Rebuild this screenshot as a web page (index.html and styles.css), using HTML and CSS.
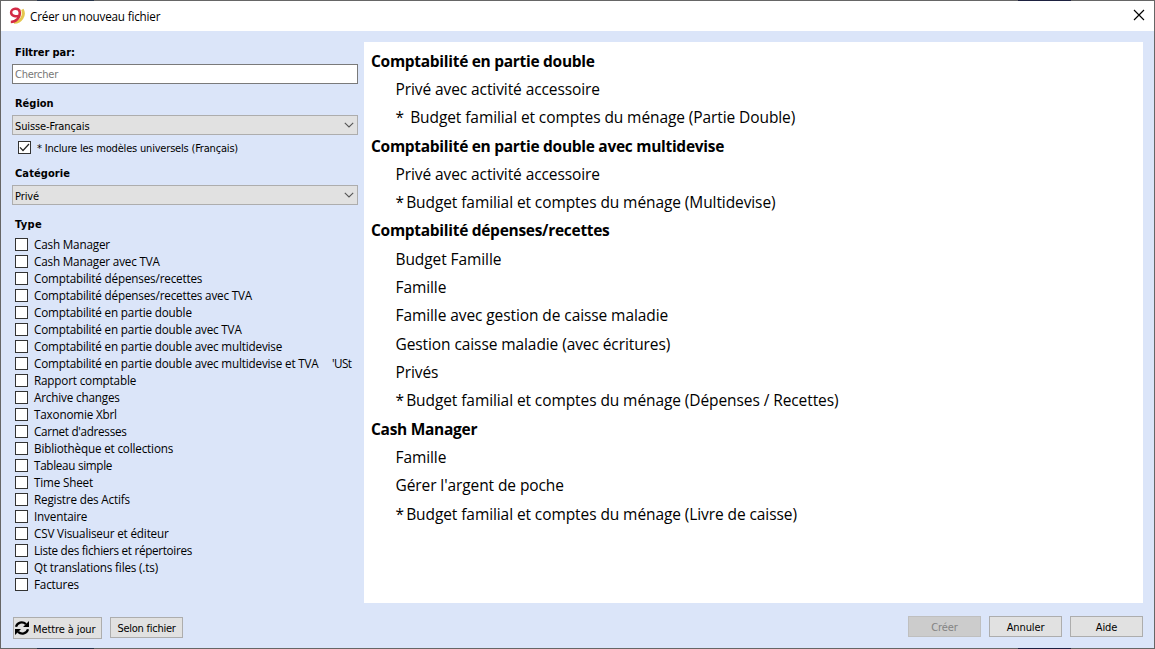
FILE: index.html
```html
<!DOCTYPE html>
<html lang="fr">
<head>
<meta charset="utf-8">
<title>Créer un nouveau fichier</title>
<link rel="stylesheet" href="styles.css">
</head>
<body>
<div class="window">
  <header class="titlebar">
    <svg class="logo" width="16" height="18" viewBox="0 0 16 18"><path d="M13.2 2.5C16.5 8 12 15.5 5 15.3" fill="none" stroke="#e5c64e" stroke-width="3"/><path d="M11.5 2C14 7 10 13.5 4 14.5" fill="none" stroke="#fff3b8" stroke-width="1"/><path d="M10 8.5C7.5 10 2.3 9.2 2.1 5.6C1.9 1.1 10.2.2 10.8 5.4C11.2 10.5 7 14.8 1.8 14.9" fill="none" stroke="#d32a45" stroke-width="2.5"/></svg>
    <span class="title">Créer un nouveau fichier</span>
    <svg class="close" width="12" height="12" viewBox="0 0 12 12"><path d="M1 1L11 11M11 1L1 11" stroke="#000" stroke-width="1.15"/></svg>
  </header>
  <main class="content">
    <aside class="filters">
      <h2 class="label label-search">Filtrer par:</h2>
      <div class="field search">Chercher</div>
      <h2 class="label label-region">Région</h2>
      <div class="field select"><span>Suisse-Français</span><svg width="10" height="6" viewBox="0 0 10 6"><path d="M.8.8L5 5L9.2.8" fill="none" stroke="#555" stroke-width="1.1"/></svg></div>
      <div class="include"><span class="box"><svg width="11" height="11" viewBox="0 0 11 11"><path d="M1 5.3L4 8.5L10 2" fill="none" stroke="#222" stroke-width="1.2"/></svg></span><span class="include-text">* Inclure les modèles universels (Français)</span></div>
      <h2 class="label label-category">Catégorie</h2>
      <div class="field select"><span>Privé</span><svg width="10" height="6" viewBox="0 0 10 6"><path d="M.8.8L5 5L9.2.8" fill="none" stroke="#555" stroke-width="1.1"/></svg></div>
      <h2 class="label label-type">Type</h2>
      <ul class="types">
        <li><i class="box"></i><span>Cash Manager</span></li>
        <li><i class="box"></i><span>Cash Manager avec TVA</span></li>
        <li><i class="box"></i><span>Comptabilité dépenses/recettes</span></li>
        <li><i class="box"></i><span>Comptabilité dépenses/recettes avec TVA</span></li>
        <li><i class="box"></i><span>Comptabilité en partie double</span></li>
        <li><i class="box"></i><span>Comptabilité en partie double avec TVA</span></li>
        <li><i class="box"></i><span>Comptabilité en partie double avec multidevise</span></li>
        <li><i class="box"></i><span class="long">Comptabilité en partie double avec multidevise et TVA</span><span class="suffix">'USt</span></li>
        <li><i class="box"></i><span>Rapport comptable</span></li>
        <li><i class="box"></i><span>Archive changes</span></li>
        <li><i class="box"></i><span>Taxonomie Xbrl</span></li>
        <li><i class="box"></i><span class="tight">Carnet d'adresses</span></li>
        <li><i class="box"></i><span>Bibliothèque et collections</span></li>
        <li><i class="box"></i><span class="tight">Tableau simple</span></li>
        <li><i class="box"></i><span>Time Sheet</span></li>
        <li><i class="box"></i><span>Registre des Actifs</span></li>
        <li><i class="box"></i><span>Inventaire</span></li>
        <li><i class="box"></i><span>CSV Visualiseur et éditeur</span></li>
        <li><i class="box"></i><span class="tight">Liste des fichiers et répertoires</span></li>
        <li><i class="box"></i><span>Qt translations files (.ts)</span></li>
        <li><i class="box"></i><span>Factures</span></li>
      </ul>
    </aside>
    <section class="templates">
      <h3>Comptabilité en partie double</h3>
      <p>Privé avec activité accessoire</p>
      <p><span class="star wide">*</span>Budget familial et comptes du ménage (Partie Double)</p>
      <h3>Comptabilité en partie double avec multidevise</h3>
      <p>Privé avec activité accessoire</p>
      <p><span class="star">*</span>Budget familial et comptes du ménage (Multidevise)</p>
      <h3>Comptabilité dépenses/recettes</h3>
      <p>Budget Famille</p>
      <p>Famille</p>
      <p>Famille avec gestion de caisse maladie</p>
      <p>Gestion caisse maladie (avec écritures)</p>
      <p>Privés</p>
      <p><span class="star">*</span>Budget familial et comptes du ménage (Dépenses / Recettes)</p>
      <h3>Cash Manager</h3>
      <p>Famille</p>
      <p>Gérer l'argent de poche</p>
      <p><span class="star">*</span>Budget familial et comptes du ménage (Livre de caisse)</p>
    </section>
  </main>
  <footer class="actions">
    <button class="btn update"><svg width="16" height="16" viewBox="0 0 16 16"><path d="M2 6.7C3.2 2.3 8.5 1 12 4.2M14 9.3C12.8 13.7 7.5 15 4 11.8" fill="none" stroke="#000" stroke-width="2.3"/><path d="M15 1V7H9ZM1 15V9H7Z"/></svg><span>Mettre à jour</span></button>
    <button class="btn from-file">Selon fichier</button>
    <span class="spacer"></span>
    <button class="btn disabled">Créer</button>
    <button class="btn">Annuler</button>
    <button class="btn">Aide</button>
  </footer>
</div>
</body>
</html>
```
FILE: styles.css
```css
* { box-sizing: border-box; }
body {
  margin: 0;
  width: 1155px;
  height: 649px;
  padding: 1px;
  overflow: hidden;
  background: linear-gradient(90deg, #666 0 37px, #263348 37px 94px, #666 94px 1018px, #1d2140 1018px 1071px, #666 1071px);
  font-family: "DejaVu Sans Condensed", "DejaVu Sans", sans-serif;
  font-stretch: condensed;
  font-size: 11px;
  color: #000;
}
.window { height: 647px; display: flex; flex-direction: column; background: #dbe5f9; }
.titlebar { height: 30px; flex: none; display: flex; align-items: center; padding: 0 9px 0 8px; background: #fff; }
.logo { margin-top: -1px; }
.title { margin: -1px 0 0 5px; font: 11.7px "Open Sans", sans-serif; letter-spacing: -.19px; white-space: nowrap; }
.close { margin-left: auto; margin-top: -2px; }
.content { height: 573px; flex: none; display: flex; padding: 11px 11px 1px; justify-content: space-between; }
.filters { width: 346px; }
.label { margin: 0 0 0 3px; font-size: 11px; font-weight: bold; height: 16px; line-height: 16px; }
.label-search { margin-top: 3px; letter-spacing: -.08px; }
.label-region { margin-top: 12px; }
.label-category { margin-top: 12px; letter-spacing: .1px; }
.label-type { margin-top: 12px; letter-spacing: .3px; }
.field { height: 20px; margin-top: 3px; border: 1px solid #adadad; padding: 0 2px; line-height: 19px; letter-spacing: -.1px; }
.search { background: #fff; border-color: #7a7a7a; color: #777; letter-spacing: -.25px; }
.select { display: flex; align-items: center; justify-content: space-between; background: #e1e1e1; padding-right: 3px; }
.select span { padding-top: 2px; }
.include { display: flex; align-items: center; gap: 6px; height: 13px; margin: 6px 0 0 6px; white-space: nowrap; }
.include-text { padding-top: 2px; letter-spacing: -.19px; }
.label-category + .field { margin-top: 3px; }
.box { width: 13px; height: 13px; flex: none; border: 1px solid #333; background: #fff; }
.box svg { display: block; }
.types { list-style: none; margin: 3px 0 0 3px; padding: 0; font: 11.7px/17px "Open Sans", sans-serif; letter-spacing: -.17px; }
.types li { height: 17px; display: flex; align-items: center; gap: 6px; white-space: nowrap; }
.types .long { width: 292px; }
.types .suffix { letter-spacing: -.6px; }
.types .tight { letter-spacing: -.3px; }
.templates { width: 779px; height: 561px; background: #fff; padding: 4.6px 7px; font: 15.5px/28.32px "Open Sans", sans-serif; white-space: nowrap; }
.templates h3, .templates p { margin: 0; height: 28.32px; font-size: inherit; }
.templates h3 { letter-spacing: -.29px; }
.templates p { padding-left: 24.5px; letter-spacing: -.09px; }
.star { display: inline-block; width: 10.7px; }
.star.wide { width: 14.7px; }
.actions { display: flex; align-items: flex-start; gap: 8px; padding: 12px 11px 0 12px; }
.btn { width: 73px; height: 21px; padding: 1px 0 0; border: 1px solid #adadad; background: #e1e1e1; color: #000; font: inherit; letter-spacing: -.12px; white-space: nowrap; }
.from-file { margin-top: 1px; letter-spacing: -.25px; }
.update { width: 89px; height: 22px; margin-top: 1px; display: flex; align-items: center; gap: 3px; padding: 0 0 0 0; letter-spacing: -.1px; }
.update span { padding-top: 2px; }
.spacer { flex: 1; }
.disabled { background: #ccc; border-color: #bfbfbf; color: #838383; }
```
